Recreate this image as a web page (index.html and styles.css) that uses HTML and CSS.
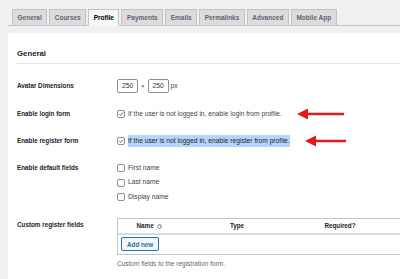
FILE: index.html
```html
<!DOCTYPE html>
<html lang="en">
<head>
    <meta charset="UTF-8">
    <title>Settings - Profile</title>
    <link rel="stylesheet" href="styles.css">
</head>
<body>
    <div class="wrap">
        <nav class="tabs">
            <a class="tab">General</a>
            <a class="tab">Courses</a>
            <a class="tab active">Profile</a>
            <a class="tab">Payments</a>
            <a class="tab">Emails</a>
            <a class="tab">Permalinks</a>
            <a class="tab">Advanced</a>
            <a class="tab">Mobile App</a>
        </nav>

        <div class="panel">
            <h2>General</h2>

            <div class="row">
                <div class="label">Avatar Dimensions</div>
                <div class="field dims">
                    <span class="num">250</span>
                    <span class="times">×</span>
                    <span class="num">250</span>
                    <span class="unit">px</span>
                </div>
            </div>

            <div class="row">
                <div class="label">Enable login form</div>
                <div class="field check-line">
                    <span class="box checked">
                        <svg viewBox="0 0 10 10" width="8" height="8"><path d="M2 5.2 L4.2 7.3 L8.2 2.4" fill="none" stroke="#2271b1" stroke-width="1.6"/></svg>
                    </span>
                    <span>If the user is not logged in, enable login from profile.</span>
                    <svg class="arrow" width="48" height="12" viewBox="0 0 48 12"><path d="M0 6 L11 0.5 L11 4.8 L47 4.8 L47 7.2 L11 7.2 L11 11.5 Z" fill="#e5171b"/></svg>
                </div>
            </div>

            <div class="row">
                <div class="label">Enable register form</div>
                <div class="field check-line">
                    <span class="box checked">
                        <svg viewBox="0 0 10 10" width="8" height="8"><path d="M2 5.2 L4.2 7.3 L8.2 2.4" fill="none" stroke="#2271b1" stroke-width="1.6"/></svg>
                    </span>
                    <span class="selected">If the user is not logged in, enable register from profile.</span>
                    <svg class="arrow" width="42" height="12" viewBox="0 0 42 12"><path d="M0 6 L11 0.5 L11 4.8 L41 4.8 L41 7.2 L11 7.2 L11 11.5 Z" fill="#e5171b"/></svg>
                </div>
            </div>

            <div class="row">
                <div class="label">Enable default fields</div>
                <div class="field options">
                    <div class="check-line opt"><span class="box"></span><span>First name</span></div>
                    <div class="check-line opt"><span class="box"></span><span>Last name</span></div>
                    <div class="check-line opt"><span class="box"></span><span>Display name</span></div>
                </div>
            </div>

            <div class="row custom">
                <div class="label">Custom register fields</div>
                <div class="field">
                    <div class="table">
                        <div class="thead">
                            <span>Name <i class="help">?</i></span>
                            <span>Type</span>
                            <span>Required?</span>
                        </div>
                        <div class="tbody">
                            <button class="add">Add new</button>
                        </div>
                    </div>
                    <p class="desc">Custom fields to the registration form.</p>
                </div>
            </div>

            <hr>
        </div>
    </div>
</body>
</html>
```

FILE: styles.css
```css
/* Basic Reset */
* {
    margin: 0;
    padding: 0;
    box-sizing: border-box;
}

html, body {
    height: 279px;
    overflow: hidden;
}

body {
    font-family: 'Liberation Sans', Arial, sans-serif;
    font-size: 6.7px;
    color: #3c434a;
    background-color: #f0f0f1;
}

.wrap {
    padding-left: 8px;
}

/* Tabs */
.tabs {
    display: flex;
    gap: 2px;
    padding: 9px 0 0 4px;
    border-bottom: 1px solid #c3c4c7;
}

.tab {
    height: 16px;
    line-height: 15px;
    padding: 0 4.5px;
    border: 1px solid #c3c4c7;
    border-bottom: none;
    background-color: #dcdcde;
    color: #5f666d;
    font-size: 6.5px;
    font-weight: bold;
}

.tab.active {
    background-color: #f6f7f7;
    color: #000;
    margin-bottom: -1px;
    height: 17px;
    border-bottom: 1px solid #f6f7f7;
}

/* Panel */
.panel {
    margin-top: 7px;
    background-color: #fff;
    padding: 16px 0 0 9px;
    min-height: 300px;
    overflow: hidden;
}

h2 {
    font-size: 7.8px;
    font-weight: bold;
    color: #1d2327;
    line-height: 10px;
    padding-bottom: 4px;
    border-bottom: 1px solid #e4e4e6;
    margin-bottom: 7.5px;
}

.row {
    display: flex;
    align-items: flex-start;
    padding: 7.5px 0;
}

.label {
    width: 100px;
    flex-shrink: 0;
    font-size: 6.3px;
    font-weight: bold;
    color: #1d2327;
    line-height: 12px;
}

.row:first-of-type .label {
    line-height: 14px;
}

.field {
    line-height: 12px;
}

/* Avatar inputs */
.dims {
    display: flex;
    align-items: center;
    gap: 3px;
    line-height: 14px;
}

.num {
    width: 21px;
    height: 14px;
    border: 1px solid #8c8f94;
    border-radius: 2px;
    padding-left: 4px;
    line-height: 12px;
    color: #2c3338;
}

.times {
    font-size: 6px;
}

.unit {
    margin-left: -1px;
}

/* Checkboxes */
.check-line {
    display: flex;
    align-items: center;
    gap: 3px;
}

.box {
    width: 8px;
    height: 8px;
    border: 1px solid #8c8f94;
    border-radius: 2px;
    background-color: #fff;
    display: flex;
    align-items: center;
    justify-content: center;
}

.box svg {
    display: block;
}

.selected {
    background-color: #b4d4fb;
    color: #1d2327;
}

.arrow {
    margin-left: 12px;
    display: block;
}

.options {
    margin: -1.25px 0;
}

.opt {
    height: 14.5px;
    line-height: 14.5px;
}

/* Custom fields table */
.custom {
    padding-top: 7.5px;
}

.custom .label {
    padding-top: 1px;
}

.table {
    width: 300px;
    border: 1px solid #c3c4c7;
    border-right: none;
}

.thead {
    display: grid;
    grid-template-columns: 63px 112px 94px 1fr;
    height: 16px;
    align-items: center;
    text-align: center;
    border-bottom: 2px solid #dcdcde;
    font-size: 6.3px;
    font-weight: bold;
    color: #1d2327;
}

.help {
    display: inline-block;
    width: 5px;
    height: 5px;
    border: 0.7px solid #8c8f94;
    border-radius: 50%;
    font-size: 3.5px;
    line-height: 4px;
    font-style: normal;
    color: #8c8f94;
    vertical-align: 0.5px;
    margin-left: 2px;
}

.tbody {
    padding: 2px 3px 3px;
}

.add {
    display: block;
    height: 14px;
    padding: 0 5px;
    border: 1px solid #2271b1;
    border-radius: 2px;
    background-color: #f6f7f7;
    color: #2271b1;
    font-family: inherit;
    font-size: 6.3px;
    font-weight: bold;
}

.desc {
    margin-top: 3px;
    color: #646970;
    font-size: 6.5px;
}

hr {
    border: none;
    border-top: 1px solid #dcdcde;
    margin-top: 6px;
}
```
